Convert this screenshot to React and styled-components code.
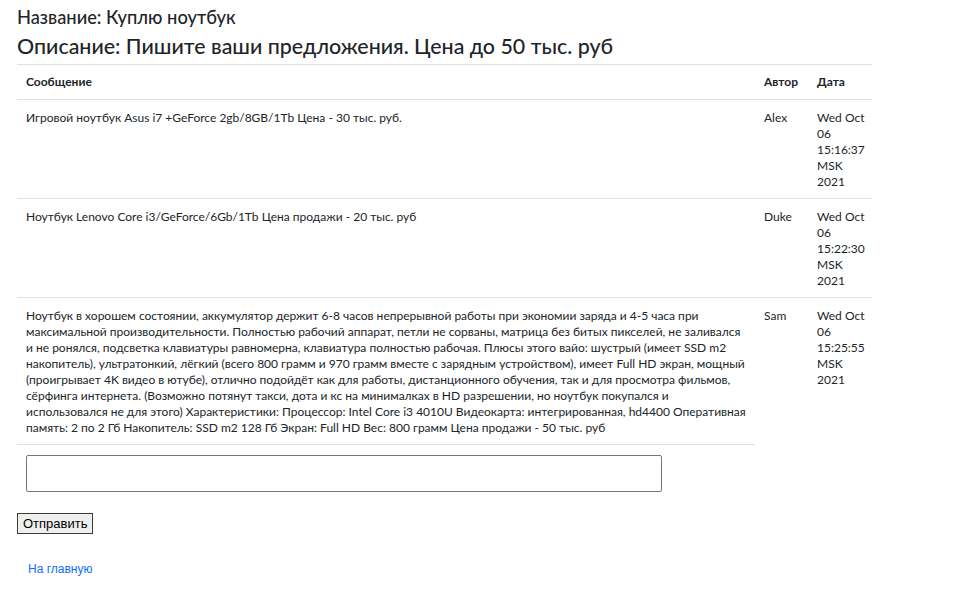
import React from "react";
import styled, { createGlobalStyle } from "styled-components";

const GlobalStyle = createGlobalStyle`
  body {
    margin: 0;
    background: #fff;
    color: #212529;
    font-family: Lato, "Liberation Sans", Arial, sans-serif;
  }
`;

const Page = styled.div`
  padding: 6px 17px 20px 17px;
`;

const Title = styled.h4`
  margin: 0;
  font-size: 18.3px;
  font-weight: 500;
  line-height: 22px;
`;

const Subtitle = styled.h3`
  margin: 4px 0 4px;
  font-size: 21.4px;
  font-weight: 500;
  line-height: 28px;
`;

const Table = styled.table`
  width: 855px;
  table-layout: fixed;
  border-collapse: collapse;
  font-size: 12px;
  line-height: 16px;
`;

const Col = styled.col`
  width: ${(p) => (p.$w ? `${p.$w}px` : "auto")};
`;

const Th = styled.th`
  text-align: left;
  vertical-align: bottom;
  font-weight: 700;
  padding: 9px ${(p) => (p.$tight ? "2px" : "8px")} 9px 9px;
  border-top: 1px solid #dee2e6;
  border-bottom: 1px solid #dee2e6;
`;

const Td = styled.td`
  vertical-align: top;
  padding: 10px ${(p) => (p.$tight ? "2px" : "8px")} 8px 9px;
  border-bottom: ${(p) => (p.$noBorder ? "none" : "1px solid #dee2e6")};
  border-top: ${(p) => (p.$topBorder ? "1px solid #dee2e6" : "none")};
`;

const Comment = styled.textarea`
  display: block;
  width: 636px;
  height: 37px;
  box-sizing: border-box;
  border: 1px solid #767676;
  border-radius: 2px;
  resize: none;
  font-family: inherit;
`;

const SendButton = styled.button`
  margin-top: 13px;
  height: 21px;
  padding: 0 5px;
  font-family: "Liberation Sans", Arial, sans-serif;
  font-size: 13px;
  color: #000;
  background: #efefef;
  border: 1px solid #3c3c3c;
  border-radius: 0;
`;

const HomeLink = styled.a`
  display: inline-block;
  margin: 28px 0 0 11px;
  font-family: "Liberation Sans", Arial, sans-serif;
  font-size: 12px;
  color: #0d6efd;
  text-decoration: none;
`;

const messages = [
  {
    text: "Игровой ноутбук Asus i7 +GeForce 2gb/8GB/1Tb Цена - 30 тыс. руб.",
    author: "Alex",
    date: "Wed Oct 06 15:16:37 MSK 2021",
  },
  {
    text: "Ноутбук Lenovo Core i3/GeForce/6Gb/1Tb Цена продажи - 20 тыс. руб",
    author: "Duke",
    date: "Wed Oct 06 15:22:30 MSK 2021",
  },
  {
    text: "Ноутбук в хорошем состоянии, аккумулятор держит 6-8 часов непрерывной работы при экономии заряда и 4-5 часа при максимальной производительности. Полностью рабочий аппарат, петли не сорваны, матрица без битых пикселей, не заливался и не ронялся, подсветка клавиатуры равномерна, клавиатура полностью рабочая. Плюсы этого вайо: шустрый (имеет SSD m2 накопитель), ультратонкий, лёгкий (всего 800 грамм и 970 грамм вместе с зарядным устройством), имеет Full HD экран, мощный (проигрывает 4K видео в ютубе), отлично подойдёт как для работы, дистанционного обучения, так и для просмотра фильмов, сёрфинга интернета. (Возможно потянут такси, дота и кс на минималках в HD разрешении, но ноутбук покупался и использовался не для этого) Характеристики: Процессор: Intel Core i3 4010U Видеокарта: интегрированная, hd4400 Оперативная память: 2 по 2 Гб Накопитель: SSD m2 128 Гб Экран: Full HD Вес: 800 грамм Цена продажи - 50 тыс. руб",
    author: "Sam",
    date: "Wed Oct 06 15:25:55 MSK 2021",
  },
];

export default function App() {
  return (
    <Page>
      <GlobalStyle />
      <Title>Название: Куплю ноутбук</Title>
      <Subtitle>Описание: Пишите ваши предложения. Цена до 50 тыс. руб</Subtitle>
      <Table>
        <colgroup>
          <Col />
          <Col $w={53} />
          <Col $w={64} />
        </colgroup>
        <thead>
          <tr>
            <Th>Сообщение</Th>
            <Th>Автор</Th>
            <Th $tight>Дата</Th>
          </tr>
        </thead>
        <tbody>
          {messages.map((m, i) => {
            const last = i === messages.length - 1;
            return (
              <tr key={i}>
                <Td $noBorder={last}>{m.text}</Td>
                <Td $noBorder={last}>{m.author}</Td>
                <Td $noBorder={last} $tight>{m.date}</Td>
              </tr>
            );
          })}
          <tr>
            <Td $noBorder $topBorder>
              <Comment />
            </Td>
          </tr>
        </tbody>
      </Table>
      <SendButton type="button">Отправить</SendButton>
      <div>
        <HomeLink href="#">На главную</HomeLink>
      </div>
    </Page>
  );
}
